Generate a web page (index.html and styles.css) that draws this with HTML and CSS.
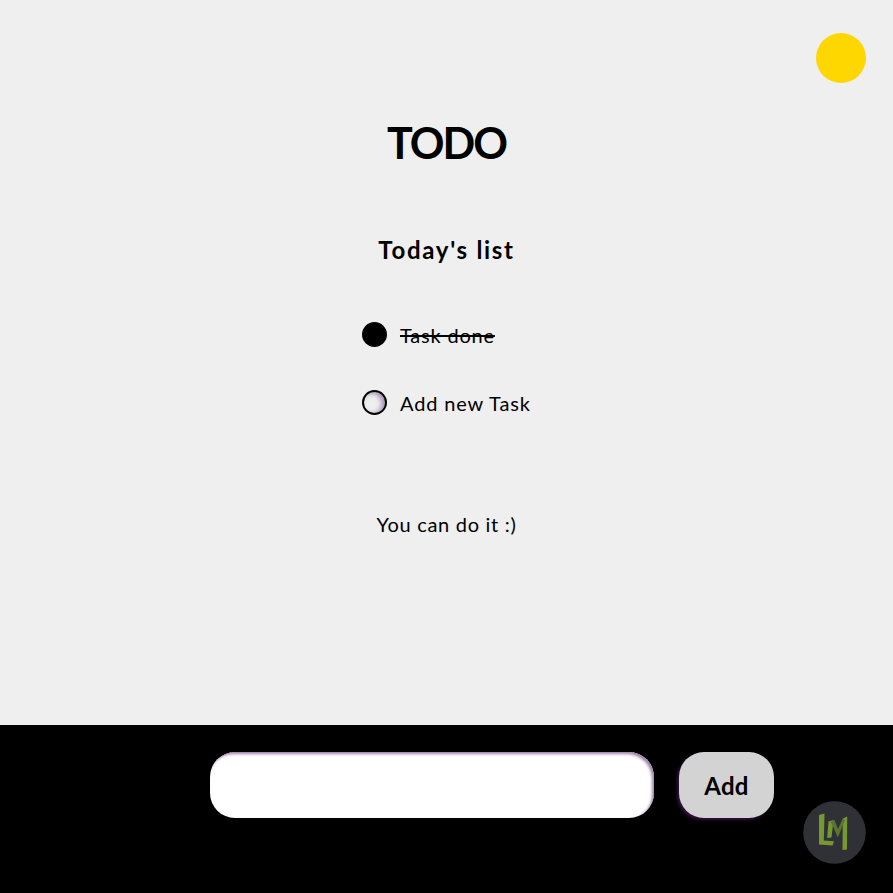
FILE: index.html
```html
<!DOCTYPE html>
<html lang="en">
<head>
<meta charset="utf-8">
<title>TODO</title>
<link rel="stylesheet" href="styles.css">
</head>
<body>
<button class="theme" aria-label="Toggle theme"></button>
<main>
  <h1>TODO</h1>
  <h2>Today's list</h2>
  <ul class="tasks">
    <li><span class="check checked"></span><span class="label done">Task done</span></li>
    <li><span class="check"></span><span class="label new">Add new Task</span></li>
  </ul>
  <p>You can do it :)</p>
</main>
<footer>
  <form>
    <input type="text" aria-label="New task">
    <button class="add" type="button">Add</button>
  </form>
</footer>
<a class="logo">
  <svg viewBox="0 0 63 63" width="63" height="63">
    <circle cx="31.500" cy="31.500" r="31.300" fill="#303137"/>
    <g fill="#759832">
      <path d="M16 14L21.500 12.500L20.800 39.500L31 40.300L29.500 44.500L16 43.500Z"/>
      <path d="M25.500 20.500L30.500 19L28.500 36.500L24.200 37Z"/>
      <path d="M39.800 17.500L44.200 15.500L44 48.500L39.500 49Z"/>
    </g>
    <path d="M27.500 21L31.500 19L35 28L39.800 17.500L42 19L34.800 36.500L29.800 25Z" fill="#587632"/>
  </svg>
</a>
</body>
</html>
```
FILE: styles.css
```css
* { box-sizing: border-box; }
body {
  margin: 0;
  height: 100vh;
  display: flex;
  flex-direction: column;
  overflow: hidden;
  background: #efefef;
  color: #000;
  font-family: "Comic Sans MS", Lato, sans-serif;
  font-size: 20px;
}
main {
  flex: 1;
  display: flex;
  flex-direction: column;
  align-items: center;
}
h1 { margin: 113px 0 0; font-size: 43px; line-height: 60px; letter-spacing: -2px; }
h2 { margin: 60px 0 0; font-size: 24px; line-height: 34px; letter-spacing: 1.7px; }
.tasks {
  list-style: none;
  width: 169px;
  margin: 54px 0 0;
  padding: 0;
  display: grid;
  gap: 40px;
}
.tasks li { display: flex; align-items: center; gap: 13px; height: 28px; white-space: nowrap; }
.check {
  flex: none;
  width: 25px;
  height: 25px;
  margin-bottom: 2px;
  border: 2px solid #000;
  border-radius: 50%;
  box-shadow: inset -3px 1px 5px #a48bb0;
}
.checked { background: #000; box-shadow: none; }
.label { line-height: 28px; }
.done { text-decoration: line-through 2px; letter-spacing: 0.8px; }
.new { letter-spacing: 0.85px; }
p { margin: 93px 0 0; line-height: 28px; letter-spacing: 0.7px; }
.theme {
  position: absolute;
  top: 33px;
  right: 27px;
  width: 50px;
  height: 50px;
  padding: 0;
  border: 0;
  border-radius: 50%;
  background: gold;
}
footer { height: 168px; padding: 27px 119px 0 210px; background: #000; }
form { display: flex; gap: 25px; }
input {
  width: 444px;
  height: 66px;
  border: 0;
  border-radius: 25px;
  background: #fff;
  box-shadow: inset -2px 2px 3px #9b80a8;
}
.add {
  width: 95px;
  height: 66px;
  padding: 0;
  border: 0;
  border-radius: 25px;
  background: #d3d3d3;
  color: #000;
  font: bold 24px "Comic Sans MS", Lato, sans-serif;
  letter-spacing: 0.3px;
  box-shadow: -2px 2px 3px #32123f;
}
.logo { position: absolute; left: 803px; top: 801px; width: 63px; height: 63px; }
.logo svg { display: block; }
```
